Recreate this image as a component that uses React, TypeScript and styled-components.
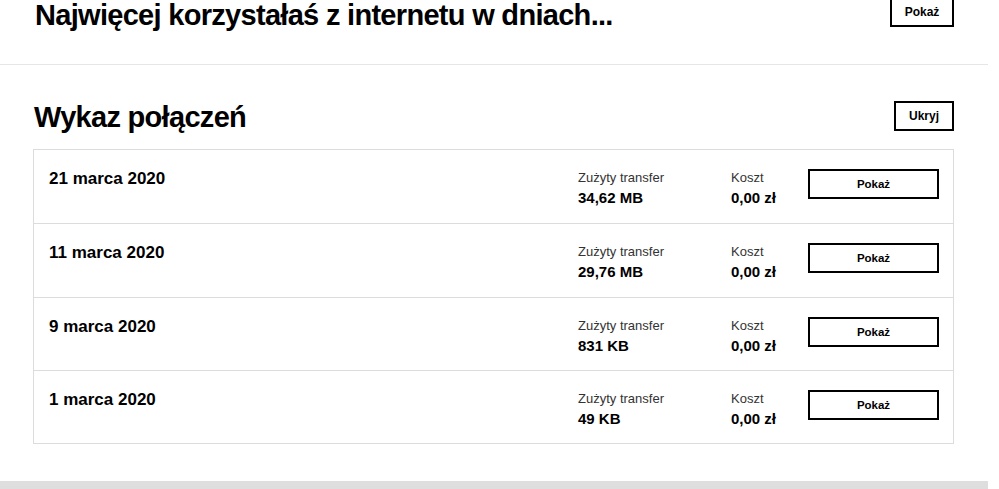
import React from "react";
import styled, { createGlobalStyle } from "styled-components";

interface Usage {
  date: string;
  transfer: string;
  cost: string;
}

const USAGE: Usage[] = [
  { date: "21 marca 2020", transfer: "34,62 MB", cost: "0,00 zł" },
  { date: "11 marca 2020", transfer: "29,76 MB", cost: "0,00 zł" },
  { date: "9 marca 2020", transfer: "831 KB", cost: "0,00 zł" },
  { date: "1 marca 2020", transfer: "49 KB", cost: "0,00 zł" },
];

const App: React.FC = () => {
  return (
    <>
      <GlobalStyle />
      <Page>
        <TopSection>
          <SectionHeader>
            <Heading>Najwięcej korzystałaś z internetu w dniach...</Heading>
            <OutlineButton $width={64} $offset={-3}>
              Pokaż
            </OutlineButton>
          </SectionHeader>
        </TopSection>

        <ListSection>
          <SectionHeader>
            <Heading>Wykaz połączeń</Heading>
            <OutlineButton $width={60} $offset={-1}>
              Ukryj
            </OutlineButton>
          </SectionHeader>

          <Table>
            {USAGE.map((row) => (
              <Row key={row.date}>
                <DateCell>{row.date}</DateCell>
                <InfoCell $width={153}>
                  <InfoLabel>Zużyty transfer</InfoLabel>
                  <InfoValue>{row.transfer}</InfoValue>
                </InfoCell>
                <InfoCell $width={77}>
                  <InfoLabel>Koszt</InfoLabel>
                  <InfoValue>{row.cost}</InfoValue>
                </InfoCell>
                <RowButton>Pokaż</RowButton>
              </Row>
            ))}
          </Table>
        </ListSection>

        <FooterBar />
      </Page>
    </>
  );
};

export default App;

// styled-components
const GlobalStyle = createGlobalStyle`
  html, body {
    margin: 0;
    padding: 0;
    background: #fff;
    overflow: hidden;
  }
  body {
    font-family: "Liberation Sans", Arial, sans-serif;
    color: #000;
  }
  * {
    box-sizing: border-box;
  }
`;

const Page = styled.div`
  width: 988px;
  display: flex;
  flex-direction: column;
`;

const TopSection = styled.section`
  height: 65px;
  padding: 0 34px;
  border-bottom: 1px solid #e6e6e6;
`;

const ListSection = styled.section`
  padding: 37px 34px 37px 33px;
  display: flex;
  flex-direction: column;
  gap: 17px;
`;

const SectionHeader = styled.div`
  display: flex;
  justify-content: space-between;
  align-items: flex-start;
`;

const Heading = styled.h2`
  margin: 0;
  padding-left: 1px;
  font-size: 29px;
  line-height: 30px;
  font-weight: 700;
  letter-spacing: -0.7px;
`;

const OutlineButton = styled.button<{ $width: number; $offset: number }>`
  width: ${(props) => props.$width}px;
  height: 30px;
  margin-top: ${(props) => props.$offset}px;
  padding: 0;
  background: #fff;
  border: 2px solid #000;
  font-family: "Liberation Sans", Arial, sans-serif;
  font-size: 12px;
  font-weight: 700;
  color: #000;
  cursor: pointer;
`;

const Table = styled.div`
  display: flex;
  flex-direction: column;
  border: 1px solid #dcdcdc;
`;

const Row = styled.div`
  display: flex;
  align-items: flex-start;
  height: 74px;
  padding: 19px 14px 0 15px;
  border-bottom: 1px solid #dcdcdc;
  &:nth-child(n + 3) {
    height: 73px;
  }
  &:last-child {
    height: 72px;
    border-bottom: none;
  }
`;

const DateCell = styled.div`
  flex: 1;
  font-size: 17px;
  line-height: 20px;
  font-weight: 700;
`;

const InfoCell = styled.div<{ $width: number }>`
  width: ${(props) => props.$width}px;
  display: flex;
  flex-direction: column;
`;

const InfoLabel = styled.span`
  font-size: 13px;
  line-height: 17px;
  color: #333;
`;

const InfoValue = styled.span`
  font-size: 15px;
  line-height: 20px;
  font-weight: 700;
  margin-top: 2px;
`;

const RowButton = styled.button`
  width: 131px;
  height: 30px;
  background: #fff;
  border: 2px solid #000;
  font-family: "Liberation Sans", Arial, sans-serif;
  font-size: 11.5px;
  font-weight: 700;
  color: #000;
  cursor: pointer;
`;

const FooterBar = styled.div`
  height: 10px;
  background: #dedede;
`;
